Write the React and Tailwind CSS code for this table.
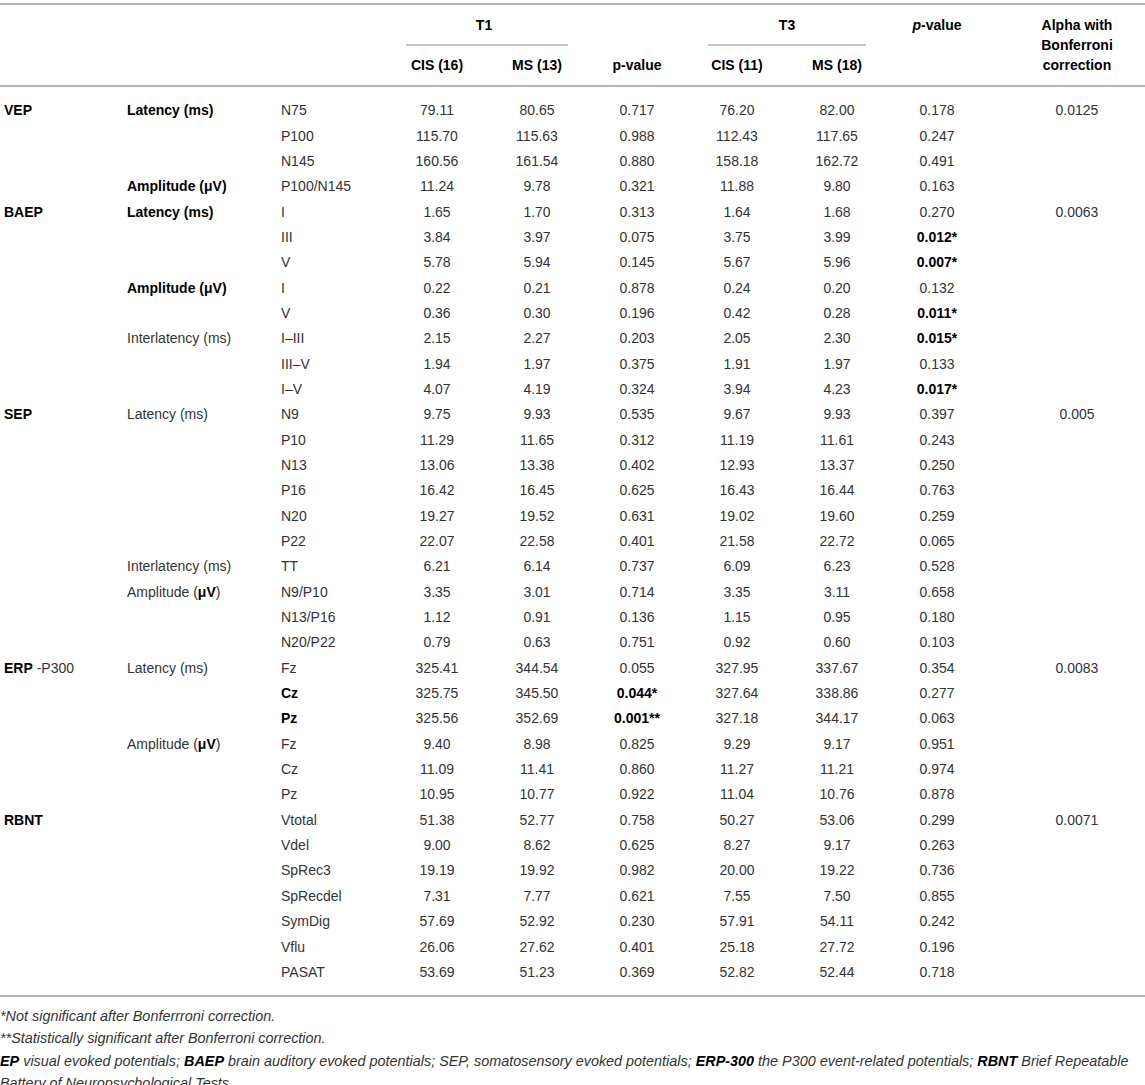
import React from 'react'

const cols = 'grid grid-cols-[123px_154px_110px_100px_100px_100px_100px_100px_100px_158px]'

const mu = (
  <>
    Amplitude (<b className="font-bold text-black">μV</b>)
  </>
)
const muBold = <b className="font-bold text-black">Amplitude (μV)</b>

// '^' prefix = bold cell
const rows = [
  ['^VEP', '^Latency (ms)', 'N75', '79.11', '80.65', '0.717', '76.20', '82.00', '0.178', '0.0125'],
  ['', '', 'P100', '115.70', '115.63', '0.988', '112.43', '117.65', '0.247', ''],
  ['', '', 'N145', '160.56', '161.54', '0.880', '158.18', '162.72', '0.491', ''],
  ['', muBold, 'P100/N145', '11.24', '9.78', '0.321', '11.88', '9.80', '0.163', ''],
  ['^BAEP', '^Latency (ms)', 'I', '1.65', '1.70', '0.313', '1.64', '1.68', '0.270', '0.0063'],
  ['', '', 'III', '3.84', '3.97', '0.075', '3.75', '3.99', '^0.012*', ''],
  ['', '', 'V', '5.78', '5.94', '0.145', '5.67', '5.96', '^0.007*', ''],
  ['', muBold, 'I', '0.22', '0.21', '0.878', '0.24', '0.20', '0.132', ''],
  ['', '', 'V', '0.36', '0.30', '0.196', '0.42', '0.28', '^0.011*', ''],
  ['', 'Interlatency (ms)', 'I–III', '2.15', '2.27', '0.203', '2.05', '2.30', '^0.015*', ''],
  ['', '', 'III–V', '1.94', '1.97', '0.375', '1.91', '1.97', '0.133', ''],
  ['', '', 'I–V', '4.07', '4.19', '0.324', '3.94', '4.23', '^0.017*', ''],
  ['^SEP', 'Latency (ms)', 'N9', '9.75', '9.93', '0.535', '9.67', '9.93', '0.397', '0.005'],
  ['', '', 'P10', '11.29', '11.65', '0.312', '11.19', '11.61', '0.243', ''],
  ['', '', 'N13', '13.06', '13.38', '0.402', '12.93', '13.37', '0.250', ''],
  ['', '', 'P16', '16.42', '16.45', '0.625', '16.43', '16.44', '0.763', ''],
  ['', '', 'N20', '19.27', '19.52', '0.631', '19.02', '19.60', '0.259', ''],
  ['', '', 'P22', '22.07', '22.58', '0.401', '21.58', '22.72', '0.065', ''],
  ['', 'Interlatency (ms)', 'TT', '6.21', '6.14', '0.737', '6.09', '6.23', '0.528', ''],
  ['', mu, 'N9/P10', '3.35', '3.01', '0.714', '3.35', '3.11', '0.658', ''],
  ['', '', 'N13/P16', '1.12', '0.91', '0.136', '1.15', '0.95', '0.180', ''],
  ['', '', 'N20/P22', '0.79', '0.63', '0.751', '0.92', '0.60', '0.103', ''],
  [<><b className="font-bold text-black">ERP</b> -P300</>, 'Latency (ms)', 'Fz', '325.41', '344.54', '0.055', '327.95', '337.67', '0.354', '0.0083'],
  ['', '', '^Cz', '325.75', '345.50', '^0.044*', '327.64', '338.86', '0.277', ''],
  ['', '', '^Pz', '325.56', '352.69', '^0.001**', '327.18', '344.17', '0.063', ''],
  ['', mu, 'Fz', '9.40', '8.98', '0.825', '9.29', '9.17', '0.951', ''],
  ['', '', 'Cz', '11.09', '11.41', '0.860', '11.27', '11.21', '0.974', ''],
  ['', '', 'Pz', '10.95', '10.77', '0.922', '11.04', '10.76', '0.878', ''],
  ['^RBNT', '', 'Vtotal', '51.38', '52.77', '0.758', '50.27', '53.06', '0.299', '0.0071'],
  ['', '', 'Vdel', '9.00', '8.62', '0.625', '8.27', '9.17', '0.263', ''],
  ['', '', 'SpRec3', '19.19', '19.92', '0.982', '20.00', '19.22', '0.736', ''],
  ['', '', 'SpRecdel', '7.31', '7.77', '0.621', '7.55', '7.50', '0.855', ''],
  ['', '', 'SymDig', '57.69', '52.92', '0.230', '57.91', '54.11', '0.242', ''],
  ['', '', 'Vflu', '26.06', '27.62', '0.401', '25.18', '27.72', '0.196', ''],
  ['', '', 'PASAT', '53.69', '51.23', '0.369', '52.82', '52.44', '0.718', ''],
]

function Cell({ v, i }) {
  let content = v
  let bold = false
  if (typeof v === 'string' && v.startsWith('^')) {
    content = v.slice(1)
    bold = true
  }
  const align = i < 3 ? 'pl-[4px] text-left' : i === 9 ? 'pl-[22px] text-center' : 'text-center'
  return (
    <div className={`${align} whitespace-nowrap ${bold ? 'font-bold text-black' : ''}`}>{content}</div>
  )
}

export default function App() {
  return (
    <div className="w-[1145px] bg-white pt-[3px] text-[14px] text-[#333] font-['Liberation_Sans',Arial,sans-serif]">
      <div className="h-[2px] bg-[#b4b4b4]" />

      {/* header */}
      <div className={`${cols} grid-rows-[20px_20px_20px] py-[10px] font-bold text-black leading-[20px]`}>
        <div className="col-start-4 col-span-2 row-start-1 text-center pr-[6px]">T1</div>
        <div className="col-start-4 col-span-2 row-start-2 flex items-center px-[19px]">
          <div className="h-[2px] w-full bg-[#c4c4c4]" />
        </div>
        <div className="col-start-4 row-start-3 text-center">CIS (16)</div>
        <div className="col-start-5 row-start-3 text-center">MS (13)</div>
        <div className="col-start-6 row-start-3 text-center">p-value</div>
        <div className="col-start-7 col-span-2 row-start-1 text-center">T3</div>
        <div className="col-start-7 col-span-2 row-start-2 flex items-center px-[21px]">
          <div className="h-[2px] w-full bg-[#c4c4c4]" />
        </div>
        <div className="col-start-7 row-start-3 text-center">CIS (11)</div>
        <div className="col-start-8 row-start-3 text-center">MS (18)</div>
        <div className="col-start-9 row-start-1 text-center"><i>p</i>-value</div>
        <div className="col-start-10 row-start-1 row-span-3 pl-[22px] text-center">
          Alpha with<br />Bonferroni<br />correction
        </div>
      </div>
      <div className="h-[2px] bg-[#b4b4b4]" />

      {/* body */}
      <div className="pt-[11px] pb-[10px]">
        {rows.map((r, ri) => (
          <div key={ri} className={`${cols} h-[25.35px] items-center`}>
            {r.map((v, i) => (
              <Cell key={i} v={v} i={i} />
            ))}
          </div>
        ))}
      </div>
      <div className="h-[2px] bg-[#b4b4b4]" />

      {/* notes */}
      <div className="pt-[8px] italic text-[14.4px] leading-[22.4px] text-[#333] pr-[2px]">
        <p>*Not significant after Bonferrroni correction.</p>
        <p>**Statistically significant after Bonferroni correction.</p>
        <p>
          <b className="font-bold text-black">EP</b> visual evoked potentials; <b className="font-bold text-black">BAEP</b> brain auditory evoked potentials; SEP, somatosensory evoked potentials; <b className="font-bold text-black">ERP-300</b> the P300 event-related potentials; <b className="font-bold text-black">RBNT</b> Brief Repeatable Battery of Neuropsychological Tests.
        </p>
      </div>
    </div>
  )
}
